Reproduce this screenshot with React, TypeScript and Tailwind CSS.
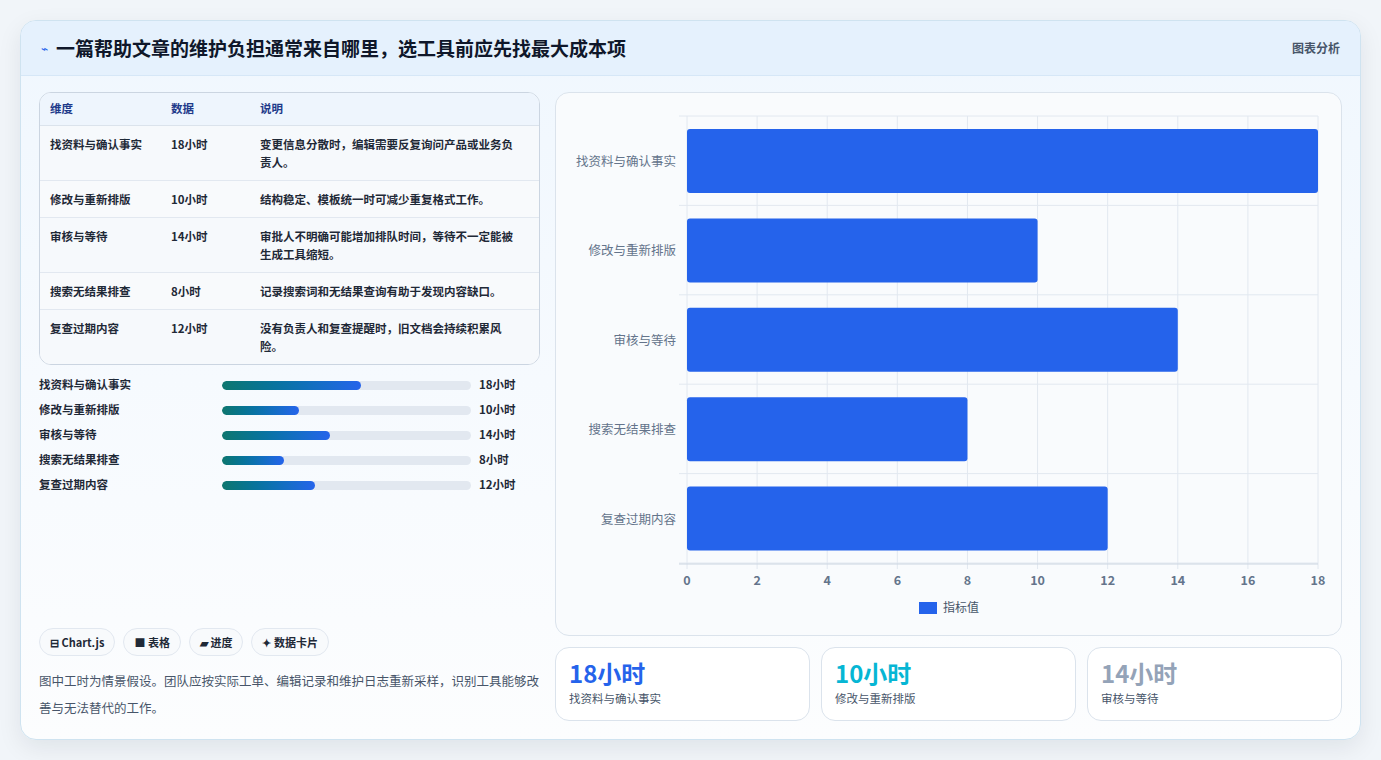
import React from 'react';

const rows = [
  { name: '找资料与确认事实', hours: 18, note: '变更信息分散时，编辑需要反复询问产品或业务负责人。' },
  { name: '修改与重新排版', hours: 10, note: '结构稳定、模板统一时可减少重复格式工作。' },
  { name: '审核与等待', hours: 14, note: '审批人不明确可能增加排队时间，等待不一定能被生成工具缩短。' },
  { name: '搜索无结果排查', hours: 8, note: '记录搜索词和无结果查询有助于发现内容缺口。' },
  { name: '复查过期内容', hours: 12, note: '没有负责人和复查提醒时，旧文档会持续积累风险。' },
];

const font = { fontFamily: '"Noto Sans CJK SC", "Liberation Sans", sans-serif' };

function Chart() {
  const x0 = 131, x1 = 762, top = 23, band = 89.4;
  const sx = (v: number) => x0 + ((x1 - x0) * v) / 18;
  return (
    <svg width="785" height="544" className="block">
      {Array.from({ length: 10 }).map((_, i) => (
        <line key={i} x1={sx(i * 2)} x2={sx(i * 2)} y1={top} y2={top + band * 5 + 6} stroke="#e2e8f0" />
      ))}
      {Array.from({ length: 6 }).map((_, i) => (
        <line key={i} x1={x0 - 8} x2={x1} y1={top + band * i} y2={top + band * i} stroke="#e2e8f0" />
      ))}
      <line x1={x0 - 8} x2={x1} y1={top + band * 5 + 1} y2={top + band * 5 + 1} stroke="#cbd5e1" />
      {rows.map((r, i) => (
        <g key={r.name}>
          <rect x={x0} y={top + band * i + 13} width={sx(r.hours) - x0} height={64} rx={3} fill="#2563eb" />
          <text x={x0 - 11} y={top + band * i + 50} textAnchor="end" fontSize="12.5" fill="#64748b">{r.name}</text>
        </g>
      ))}
      {Array.from({ length: 10 }).map((_, i) => (
        <text key={i} x={sx(i * 2)} y={492} textAnchor="middle" fontSize="12.5" fontWeight="600" fill="#64748b">{i * 2}</text>
      ))}
      <rect x={363} y={509} width={18} height={12} fill="#2563eb" />
      <text x={387} y={519} fontSize="12" fill="#475569">指标值</text>
    </svg>
  );
}

export default function App() {
  const stats = [
    { v: '18小时', l: '找资料与确认事实', c: 'text-[#2563eb]' },
    { v: '10小时', l: '修改与重新排版', c: 'text-[#06b6d4]' },
    { v: '14小时', l: '审核与等待', c: 'text-[#94a3b8]' },
  ];
  return (
    <div className="w-[1381px] h-[760px] bg-[#f1f5f9] pt-[20px] pl-[20px]" style={font}>
      <div className="w-[1341px] h-[720px] rounded-[16px] border border-[#cfe3f0] bg-gradient-to-b from-[#f0f7fe] to-[#fcfdfe] shadow-[0_8px_24px_rgba(15,23,42,0.08)] overflow-hidden flex flex-col">
        <div className="h-[55px] shrink-0 bg-[#e5f1fd] border-b border-[#d6e7f7] flex items-center justify-between px-[20px]">
          <div className="flex items-center gap-[8px]">
            <span className="text-[#2563eb] text-[12px]">⌁</span>
            <h1 className="text-[19px] font-bold text-[#0f172a]">一篇帮助文章的维护负担通常来自哪里，选工具前应先找最大成本项</h1>
          </div>
          <span className="text-[12px] font-semibold text-[#475569]">图表分析</span>
        </div>
        <div className="flex gap-[15px] px-[18px] pt-[16px] pb-[18px] flex-1">
          <div className="w-[503px] flex flex-col">
            <div className="rounded-[12px] border border-[#cbd5e1] bg-white overflow-hidden text-[11.5px]">
              <div className="grid grid-cols-[121px_89px_1fr] bg-[#eef5fd] h-[33px] items-center px-[10px] font-semibold text-[#1e3a8a] border-b border-[#dbe3ec]">
                <span>维度</span><span>数据</span><span>说明</span>
              </div>
              {rows.map((r, i) => (
                <div key={r.name} className={`grid grid-cols-[121px_89px_1fr] px-[10px] py-[9px] leading-[18px] border-b border-[#e2e8f0] last:border-b-0 font-semibold text-[#1f2937] ${i % 2 ? 'bg-[#f8fafc]' : 'bg-[#f6f9fc]'}`}>
                  <span>{r.name}</span><span>{r.hours}小时</span><span className="pr-[12px]">{r.note}</span>
                </div>
              ))}
            </div>
            <div className="mt-[11px] flex flex-col gap-[7px]">
              {rows.map(r => (
                <div key={r.name} className="flex items-center h-[18px] text-[11.5px] font-semibold text-[#1f2937]">
                  <span className="w-[183px]">{r.name}</span>
                  <div className="w-[249px] h-[9px] rounded-full bg-[#e2e8f0] overflow-hidden">
                    <div className="h-full rounded-full bg-gradient-to-r from-[#0f766e] to-[#2563eb]" style={{ width: `${(r.hours / 18) * 56}%` }} />
                  </div>
                  <span className="ml-[8px]">{r.hours}小时</span>
                </div>
              ))}
            </div>
            <div className="mt-auto">
              <div className="flex gap-[8px] text-[11px] font-semibold text-[#1f2937]">
                {['⊟ Chart.js', '■ 表格', '▰ 进度', '✦ 数据卡片'].map(t => (
                  <span key={t} className="h-[28px] px-[10px] rounded-full border border-[#e2e8f0] bg-[#f8fafc] flex items-center">{t}</span>
                ))}
              </div>
              <p className="mt-[11px] text-[12.5px] leading-[27px] text-[#475569]">图中工时为情景假设。团队应按实际工单、编辑记录和维护日志重新采样，识别工具能够改善与无法替代的工作。</p>
            </div>
          </div>
          <div className="flex-1 flex flex-col">
            <div className="h-[544px] rounded-[14px] border border-[#dbe3ec] bg-[#f9fbfd] overflow-hidden">
              <Chart />
            </div>
            <div className="mt-[11px] grid grid-cols-3 gap-[11px]">
              {stats.map(s => (
                <div key={s.l} className="h-[74px] rounded-[14px] border border-[#dbe3ec] bg-white px-[13px] pt-[10px]">
                  <div className={`text-[24px] font-bold leading-[30px] ${s.c}`}>{s.v}</div>
                  <div className="text-[11.5px] text-[#475569] mt-[2px]">{s.l}</div>
                </div>
              ))}
            </div>
          </div>
        </div>
      </div>
    </div>
  );
}
